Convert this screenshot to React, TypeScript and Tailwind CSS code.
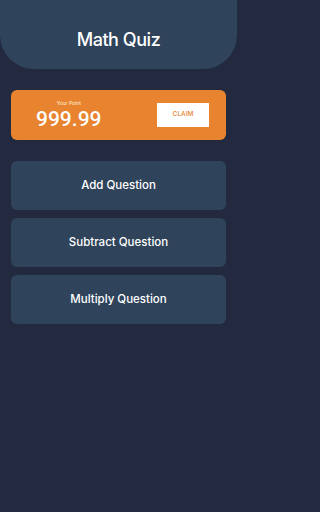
const questions = ["Add Question", "Subtract Question", "Multiply Question"];

export default function App() {
  return (
    <div className="min-h-[512px] w-full bg-[#232A40]">
      <div
        className="min-h-[512px] w-[237px] bg-[#232A40] text-white"
        style={{ fontFamily: "Inter, Roboto, sans-serif" }}
      >
        <header className="flex h-[69px] items-center justify-center rounded-b-[34px] bg-[#2F445B] pt-[9px]">
          <h1 className="text-[18px] font-medium tracking-tight">Math Quiz</h1>
        </header>

        <section className="mx-[11px] mt-[21px] flex h-[50px] items-center justify-between rounded-[6px] bg-[#E8832F] pl-[25px] pr-[17px]">
          <div className="flex flex-col items-center">
            <span className="text-[5px] leading-[6px] text-orange-100">Your Point</span>
            <span className="mt-[2px] font-['Roboto',sans-serif] text-[21px] font-medium leading-[22px]">
              999.99
            </span>
          </div>
          <button className="flex h-[24px] w-[52px] items-center justify-center bg-white text-[6.5px] font-medium text-[#E8832F]">
            CLAIM
          </button>
        </section>

        <div className="mx-[11px] mt-[21px] flex flex-col gap-[8px]">
          {questions.map((q) => (
            <button
              key={q}
              className="flex h-[49px] items-center justify-center rounded-[6px] bg-[#2F445B] text-[11.5px] font-medium"
            >
              {q}
            </button>
          ))}
        </div>
      </div>
    </div>
  );
}
